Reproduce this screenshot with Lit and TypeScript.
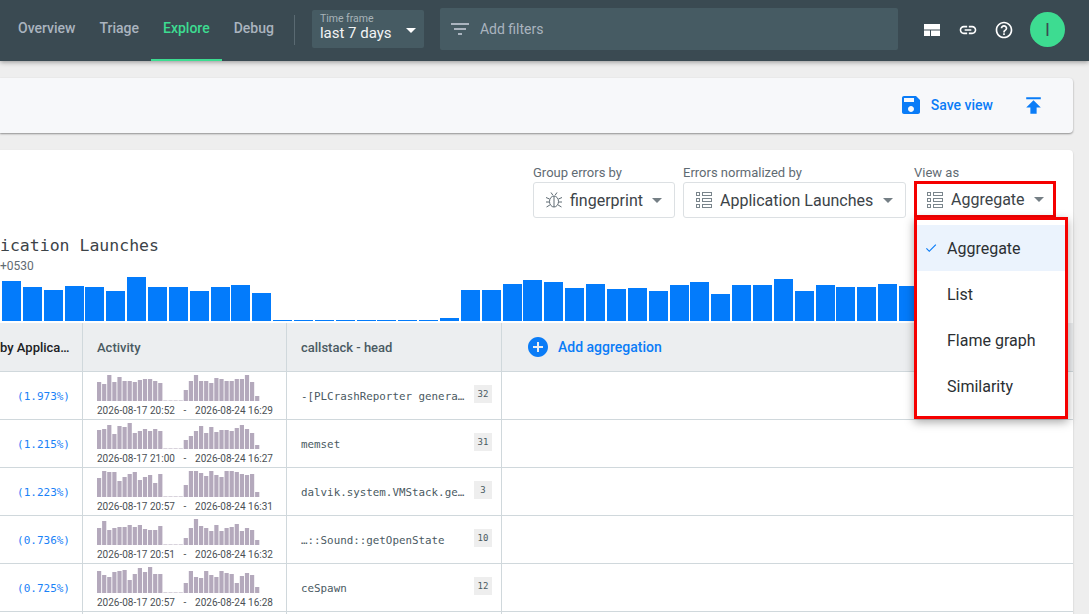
import { LitElement, css, html, svg } from 'lit'
import { customElement } from 'lit/decorators.js'

const chartBars = [
  32, 40, 34, 31, 35, 34, 30, 44, 34, 34, 30, 34, 36, 28, 1, 1, 1, 1, 1, 1, 1, 1, 3, 31, 31, 37, 41, 39, 33, 37, 32, 33, 30,
  36, 39, 27, 36, 36, 42, 30, 36, 34, 34, 37, 35, 34, 36, 33, 35, 34, 36,
]

interface Row {
  pct: string
  from: string
  to: string
  stack: string
  count: string
  left: number[]
  right: number[]
}

const rows: Row[] = [
  {
    pct: '(1.973%)',
    from: '2026-08-17 20:52',
    to: '2026-08-24 16:29',
    stack: '-[PLCrashReporter genera…',
    count: '32',
    left: [19, 17, 26, 19, 24, 20, 20, 19, 21, 22, 22, 20, 18],
    right: [11, 20, 26, 20, 20, 18, 23, 22, 20, 20, 22, 22, 26, 19, 5],
  },
  {
    pct: '(1.215%)',
    from: '2026-08-17 21:00',
    to: '2026-08-24 16:27',
    stack: 'memset',
    count: '31',
    left: [19, 20, 24, 15, 23, 22, 26, 16, 18, 20, 18, 20, 18],
    right: [9, 13, 18, 23, 16, 22, 17, 19, 19, 18, 21, 24, 20, 16, 4],
  },
  {
    pct: '(1.223%)',
    from: '2026-08-17 20:57',
    to: '2026-08-24 16:31',
    stack: 'dalvik.system.VMStack.ge…',
    count: '3',
    left: [19, 26, 25, 25, 16, 20, 23, 25, 17, 20, 22, 14, 23],
    right: [12, 26, 26, 24, 21, 26, 22, 20, 26, 26, 25, 23, 22, 23, 5],
  },
  {
    pct: '(0.736%)',
    from: '2026-08-17 20:51',
    to: '2026-08-24 16:32',
    stack: '…::Sound::getOpenState',
    count: '10',
    left: [17, 24, 15, 17, 18, 18, 20, 18, 20, 16, 15, 15, 19],
    right: [7, 17, 26, 19, 17, 14, 20, 14, 17, 18, 21, 14, 17, 15, 5],
  },
  {
    pct: '(0.725%)',
    from: '2026-08-17 20:57',
    to: '2026-08-24 16:28',
    stack: 'ceSpawn',
    count: '12',
    left: [22, 18, 16, 21, 22, 23, 13, 19, 25, 21, 26, 19, 19],
    right: [10, 22, 16, 15, 22, 18, 16, 22, 20, 19, 10, 17, 20, 18, 6],
  },
]

const icon = (d: string, size: number, cls = '') =>
  html`<svg class=${cls} width=${size} height=${size} viewBox="0 0 24 24" fill="currentColor"><path d=${d}></path></svg>`

const listIcon = html`<svg class="glyph" width="18" height="18" viewBox="0 0 18 18" fill="none" stroke="#7a858c" stroke-width="1">
  <rect x="1.5" y="1.5" width="3" height="3"></rect>
  <rect x="1.5" y="7.5" width="3" height="3"></rect>
  <rect x="1.5" y="13.5" width="3" height="3"></rect>
  <rect x="7.5" y="1.5" width="9" height="3"></rect>
  <rect x="7.5" y="7.5" width="9" height="3"></rect>
  <rect x="7.5" y="13.5" width="9" height="3"></rect>
</svg>`

const bugIcon = html`<svg class="glyph" width="18" height="18" viewBox="0 0 18 18" fill="none" stroke="#5f6b73" stroke-width="1">
  <ellipse cx="9" cy="10.5" rx="4.5" ry="5.5"></ellipse>
  <path d="M9 5v11M6 1.5l1.8 2.6M12 1.5l-1.8 2.6M1 6.5l3.5 1.5M17 6.5L13.5 8M1 11h3.5M17 11h-3.5M1.5 16l3.4-2M16.5 16l-3.4-2"></path>
</svg>`

function spark(r: Row) {
  const pitch = 5.1
  const all = [...r.left, 0, 0, 0, 0, ...r.right]
  return html`<svg class="spark" width="164" height="27" viewBox="0 0 164 27">
    ${all.map((h, i) =>
      h === 0
        ? svg`<rect x=${i * pitch} y="26" width="4.2" height="1" fill="#d8d3dc"></rect>`
        : svg`<rect x=${i * pitch} y=${27 - h} width="4.2" height=${h} fill="#b4a9bc"></rect>`,
    )}
  </svg>`
}

@customElement('app-root')
export class AppRoot extends LitElement {
  static styles = css`
    :host {
      display: block;
      width: 1089px;
      height: 614px;
      overflow: hidden;
      background: #eeeeee;
      font-family: Roboto, sans-serif;
      color: #202124;
    }
    .top {
      position: relative;
      z-index: 2;
      height: 61px;
      display: flex;
      align-items: center;
      background: #3a4a52;
      box-shadow: 0 1px 5px rgba(0, 0, 0, 0.4);
      color: #aab4bf;
    }
    .nav {
      display: flex;
      align-self: stretch;
      margin-left: 6px;
    }
    .tab {
      padding: 0 12px 3px;
      display: flex;
      align-items: center;
      font-size: 14px;
      font-weight: 500;
      border-bottom: 2px solid transparent;
    }
    .tab.on {
      color: #3ddc91;
      border-bottom-color: #3ddc91;
    }
    .sep {
      width: 1px;
      height: 30px;
      margin: 0 17px 2px 8px;
      background: #5a6a72;
    }
    .time {
      width: 112px;
      height: 38px;
      box-sizing: border-box;
      margin-right: 16px;
      margin-bottom: 3px;
      padding: 3px 8px 0;
      border-radius: 2px;
      background: #465b63;
      position: relative;
    }
    .time small {
      display: block;
      font-size: 10.5px;
      line-height: 12px;
      color: #a8b3b8;
    }
    .time span {
      display: block;
      font-size: 15px;
      line-height: 16px;
      color: #f2f4f5;
    }
    .time i {
      position: absolute;
      right: 8px;
      top: 18px;
      border: 5px solid transparent;
      border-top-color: #fff;
      border-bottom: 0;
    }
    .filter {
      width: 458px;
      height: 42px;
      box-sizing: border-box;
      margin-bottom: 3px;
      padding: 0 8px;
      display: flex;
      align-items: center;
      gap: 8px;
      border-radius: 2px;
      background: #465b63;
      font-size: 14px;
    }
    .actions {
      display: flex;
      align-items: center;
      margin-left: 25px;
      padding-bottom: 2px;
      color: #fff;
    }
    .actions svg {
      display: block;
    }
    .gap {
      width: 17px;
    }
    .gap.less {
      width: 16px;
    }
    .avatar {
      width: 35px;
      height: 35px;
      margin-left: 16px;
      border-radius: 50%;
      background: #3ddc91;
      color: #3a4a52;
      font-size: 18px;
      font-weight: 400;
      display: flex;
      align-items: center;
      justify-content: center;
    }
    .main {
      padding: 17px 16px 0 0;
    }
    .toolbar {
      height: 55px;
      box-sizing: border-box;
      display: flex;
      align-items: center;
      justify-content: flex-end;
      padding: 0 27px 1px 0;
      border-radius: 0 4px 4px 0;
      background: #f7f8fa;
      box-shadow: 0 1px 2px rgba(0, 0, 0, 0.4);
      color: #0a7cf7;
    }
    .save {
      display: flex;
      align-items: center;
      gap: 8px;
      margin-right: 28px;
      font-size: 14px;
      font-weight: 500;
    }
    .card {
      position: relative;
      margin-top: 17px;
      padding-top: 16px;
      border-radius: 0 4px 0 0;
      background: #fff;
      box-shadow: 0 1px 2px rgba(0, 0, 0, 0.2);
    }
    .controls {
      display: flex;
      justify-content: flex-end;
      gap: 8px;
      padding-right: 17px;
    }
    .control label {
      display: block;
      height: 14px;
      margin-bottom: 2px;
      font-size: 13px;
      line-height: 14px;
      color: #5f6b73;
    }
    .select {
      height: 36px;
      box-sizing: border-box;
      display: flex;
      align-items: center;
      padding: 0 12px 0 11px;
      border: 1px solid #dce0e3;
      border-radius: 3px;
      font-size: 16px;
      color: #3c4348;
    }
    .select .glyph {
      margin-right: 7px;
      flex: none;
    }
    .select b {
      margin-left: auto;
      border: 5px solid transparent;
      border-top-color: #757f85;
      border-bottom: 0;
    }
    .w1 {
      width: 142px;
    }
    .w2 {
      width: 223px;
    }
    .w3 {
      width: 142px;
      height: 37px;
      margin-top: -1px;
      border: 3px solid #f50000;
      border-radius: 0;
      padding: 0 9px;
    }
    .viewas {
      position: relative;
    }
    .menu {
      position: absolute;
      z-index: 3;
      left: 0;
      top: 51px;
      width: 154px;
      box-sizing: border-box;
      padding: 5px 0 7px;
      border: 3px solid #f50000;
      background: #fff;
      box-shadow: 0 3px 9px rgba(0, 0, 0, 0.35);
    }
    .item {
      height: 46px;
      box-sizing: border-box;
      display: flex;
      align-items: center;
      padding-left: 30px;
      font-size: 16px;
      color: #2b2f33;
      position: relative;
    }
    .item.on {
      background: #ebf3fd;
    }
    .item svg {
      position: absolute;
      left: 7px;
      top: 16px;
      color: #0a7cf7;
    }
    h2 {
      margin: 18px 0 0;
      font-family: 'DejaVu Sans Mono', monospace;
      font-size: 16.5px;
      line-height: 20px;
      font-weight: 400;
      color: #3c4348;
    }
    .tz {
      margin-top: 3px;
      height: 14px;
      font-size: 12px;
      line-height: 14px;
      color: #5f6b73;
    }
    .chart {
      height: 48px;
      display: flex;
      align-items: flex-end;
      gap: 1.87px;
      margin-left: -18.87px;
      overflow: hidden;
    }
    .chart div {
      flex: none;
      width: 19px;
      background: #037bfb;
    }
    .table {
      margin-top: 2px;
    }
    .row {
      display: grid;
      grid-template-columns: 83px 204px 215px 1fr;
      height: 48px;
      box-sizing: border-box;
      border-bottom: 1px solid #d0d8dc;
    }
    .row.head {
      height: 49px;
      background: #eceef0;
    }
    .cell {
      box-sizing: border-box;
      border-right: 1px solid #d0d8dc;
      padding-left: 14px;
      min-width: 0;
    }
    .cell:last-child {
      border-right: 0;
      padding-left: 24px;
    }
    .head .cell {
      display: flex;
      align-items: center;
      font-size: 13px;
      font-weight: 500;
      color: #4a5a62;
    }
    .head .cell.first {
      padding-left: 0;
      color: #202124;
      white-space: nowrap;
    }
    .head .add {
      gap: 8px;
      color: #0a7cf7;
      font-size: 14px;
    }
    .pct {
      padding: 2px 12px 0 0;
      display: flex;
      align-items: center;
      justify-content: flex-end;
      font-family: 'DejaVu Sans Mono', monospace;
      font-size: 11px;
      color: #1a82f7;
    }
    .activity {
      padding-top: 2px;
    }
    .spark {
      display: block;
    }
    .dates {
      display: flex;
      width: 176px;
      justify-content: space-between;
      margin-top: 4px;
      font-size: 10px;
      line-height: 12px;
      color: #4a4f54;
      white-space: nowrap;
    }
    .stack {
      display: flex;
      align-items: center;
      padding-right: 9px;
      font-family: 'DejaVu Sans Mono', monospace;
      font-size: 10.85px;
      color: #4a5a62;
    }
    .stack span {
      flex: 1;
      padding-top: 2px;
      white-space: nowrap;
      overflow: hidden;
    }
    .stack em {
      width: 18px;
      height: 18px;
      margin-bottom: 4px;
      display: flex;
      align-items: center;
      justify-content: center;
      background: #eeeeee;
      font-style: normal;
      font-size: 9px;
    }
  `

  render() {
    return html`
      <div class="top">
        <div class="nav">
          <div class="tab">Overview</div>
          <div class="tab">Triage</div>
          <div class="tab on">Explore</div>
          <div class="tab">Debug</div>
        </div>
        <div class="sep"></div>
        <div class="time">
          <small>Time frame</small>
          <span>last 7 days</span>
          <i></i>
        </div>
        <div class="filter">
          ${icon('M10 18h4v-2h-4v2zM3 6v2h18V6H3zm3 7h12v-2H6v2z', 24)}
          <span>Add filters</span>
        </div>
        <div class="actions">
          <svg width="18" height="12" viewBox="0 0 18 12" fill="#fff">
            <path d="M1 0h16v5.5H1zM1 6.5h6V12H1zM8 6.5h9V12H8z"></path>
          </svg>
          <span class="gap"></span>
          ${icon(
            'M3.9 12c0-1.71 1.39-3.1 3.1-3.1h4V7H7c-2.76 0-5 2.24-5 5s2.24 5 5 5h4v-1.9H7c-1.71 0-3.1-1.39-3.1-3.1zM8 13h8v-2H8v2zm9-6h-4v1.9h4c1.71 0 3.1 1.39 3.1 3.1s-1.39 3.1-3.1 3.1h-4V17h4c2.76 0 5-2.24 5-5s-2.24-5-5-5z',
            20,
          )}
          <span class="gap less"></span>
          ${icon(
            'M11 18h2v-2h-2v2zm1-16C6.48 2 2 6.48 2 12s4.48 10 10 10 10-4.48 10-10S17.52 2 12 2zm0 18c-4.41 0-8-3.59-8-8s3.59-8 8-8 8 3.59 8 8-3.59 8-8 8zm0-14c-2.21 0-4 1.79-4 4h2c0-1.1.9-2 2-2s2 .9 2 2c0 2-3 1.75-3 5h2c0-2.25 3-2.5 3-5 0-2.21-1.79-4-4-4z',
            20,
          )}
          <div class="avatar">I</div>
        </div>
      </div>
      <div class="main">
        <div class="toolbar">
          <div class="save">
            ${icon(
              'M17 3H5c-1.11 0-2 .9-2 2v14c0 1.1.89 2 2 2h14c1.1 0 2-.9 2-2V7l-4-4zm-5 16c-1.66 0-3-1.34-3-3s1.34-3 3-3 3 1.34 3 3-1.34 3-3 3zm3-10H5V5h10v4z',
              24,
            )}
            <span>Save view</span>
          </div>
          ${icon('M5 4v2h14V4H5zm0 10h4v6h6v-6h4l-7-7-7 7z', 25)}
        </div>
        <div class="card">
          <div class="controls">
            <div class="control">
              <label>Group errors by</label>
              <div class="select w1">${bugIcon}fingerprint<b></b></div>
            </div>
            <div class="control">
              <label>Errors normalized by</label>
              <div class="select w2">${listIcon}Application Launches<b></b></div>
            </div>
            <div class="control viewas">
              <label>View as</label>
              <div class="select w3">${listIcon}Aggregate<b></b></div>
              <div class="menu">
                <div class="item on">${icon('M9 16.17L4.83 12l-1.42 1.41L9 19 21 7l-1.41-1.41z', 14)}Aggregate</div>
                <div class="item">List</div>
                <div class="item">Flame graph</div>
                <div class="item">Similarity</div>
              </div>
            </div>
          </div>
          <h2>ication Launches</h2>
          <div class="tz">+0530</div>
          <div class="chart">${chartBars.map((h) => html`<div style="height:${h}px"></div>`)}</div>
          <div class="table">
            <div class="row head">
              <div class="cell first">by Applica…</div>
              <div class="cell">Activity</div>
              <div class="cell">callstack - head</div>
              <div class="cell add">
                ${icon(
                  'M12 2C6.48 2 2 6.48 2 12s4.48 10 10 10 10-4.48 10-10S17.52 2 12 2zm5 11h-4v4h-2v-4H7v-2h4V7h2v4h4v2z',
                  24,
                )}
                <span>Add aggregation</span>
              </div>
            </div>
            ${rows.map(
              (r) => html`
                <div class="row">
                  <div class="cell pct">${r.pct}</div>
                  <div class="cell activity">
                    ${spark(r)}
                    <div class="dates"><span>${r.from}</span><span>-</span><span>${r.to}</span></div>
                  </div>
                  <div class="cell stack"><span>${r.stack}</span><em>${r.count}</em></div>
                  <div class="cell"></div>
                </div>
              `,
            )}
            <div class="row">
              <div class="cell"></div>
              <div class="cell"></div>
              <div class="cell"></div>
              <div class="cell"></div>
            </div>
          </div>
        </div>
      </div>
    `
  }
}
